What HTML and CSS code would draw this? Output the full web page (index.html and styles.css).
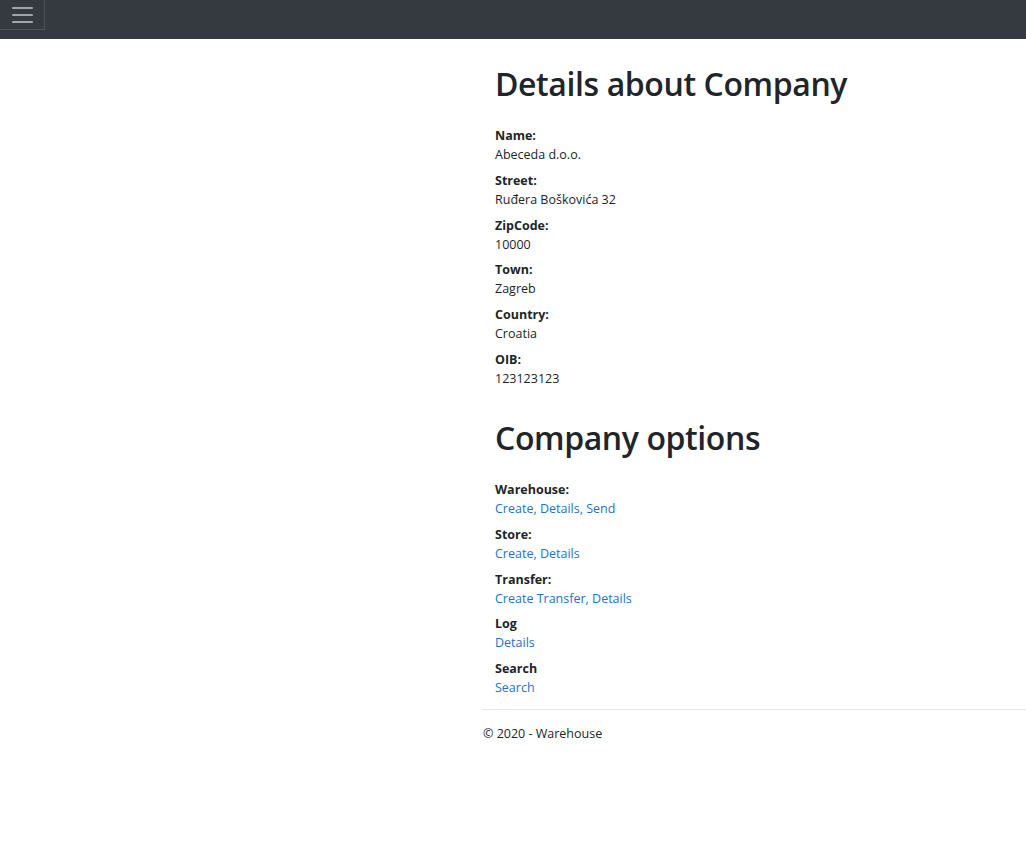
FILE: index.html
```html
<!DOCTYPE html>
<html lang="en">
<head>
<meta charset="utf-8">
<title>Company details</title>
<link rel="stylesheet" href="styles.css">
</head>
<body>
<header class="navbar">
  <button class="toggler" type="button" aria-label="Toggle navigation">
    <span class="bar"></span><span class="bar"></span><span class="bar"></span>
  </button>
</header>
<div class="layout">
  <div class="side"></div>
  <div class="main">
    <main class="content">
      <h1>Details about Company</h1>
      <dl class="list">
        <dt>Name:</dt><dd>Abeceda d.o.o.</dd>
        <dt>Street:</dt><dd>Ruđera Boškovića 32</dd>
        <dt>ZipCode:</dt><dd>10000</dd>
        <dt>Town:</dt><dd>Zagreb</dd>
        <dt>Country:</dt><dd>Croatia</dd>
        <dt>OIB:</dt><dd>123123123</dd>
      </dl>
      <h1>Company options</h1>
      <dl class="list list-last">
        <dt>Warehouse:</dt><dd class="links"><a href="#">Create</a>, <a href="#">Details</a>, <a href="#">Send</a></dd>
        <dt>Store:</dt><dd class="links"><a href="#">Create</a>, <a href="#">Details</a></dd>
        <dt>Transfer:</dt><dd class="links"><a href="#">Create Transfer</a>, <a href="#">Details</a></dd>
        <dt>Log</dt><dd class="links"><a href="#">Details</a></dd>
        <dt>Search</dt><dd class="links"><a href="#">Search</a></dd>
      </dl>
    </main>
    <footer class="footer">© 2020 - Warehouse</footer>
  </div>
</div>
</body>
</html>
```
FILE: styles.css
```css
html, body {
  margin: 0;
  padding: 0;
}
body {
  font-family: "Open Sans", "Noto Sans", sans-serif;
  color: #212529;
  background: #fff;
  font-size: 12.5px;
  line-height: 19px;
}
.navbar {
  height: 39px;
  background: #343a40;
  display: flex;
  align-items: flex-start;
}
.toggler {
  width: 45px;
  height: 30px;
  margin: 0;
  padding: 0;
  background: transparent;
  border: 1px solid rgba(255,255,255,0.12);
  border-top: none;
  border-left: none;
  display: flex;
  flex-direction: column;
  align-items: center;
  justify-content: center;
  gap: 5px;
}
.bar {
  display: block;
  width: 21px;
  height: 2px;
  background: rgba(255,255,255,0.55);
  border-radius: 1px;
}
.layout {
  display: flex;
}
.side {
  width: 483px;
  flex: none;
}
.main {
  flex: 1;
}
.content {
  padding: 22px 12px 3px;
}
h1 {
  font-size: 32px;
  font-weight: 600;
  line-height: 46px;
  margin: 0 0 19px;
  letter-spacing: -0.4px;
}
.list {
  margin: 0 0 27px;
}
.list-last {
  margin-bottom: 9px;
}
dt {
  font-weight: 700;
}
dd {
  margin: 0 0 6.8px;
}
.links {
  color: #1b73d2;
}
a {
  color: #1b73d2;
  text-decoration: none;
}
.footer {
  border-top: 1px solid #e5e5e5;
  padding: 14px 0 0;
  line-height: 19px;
}
```
